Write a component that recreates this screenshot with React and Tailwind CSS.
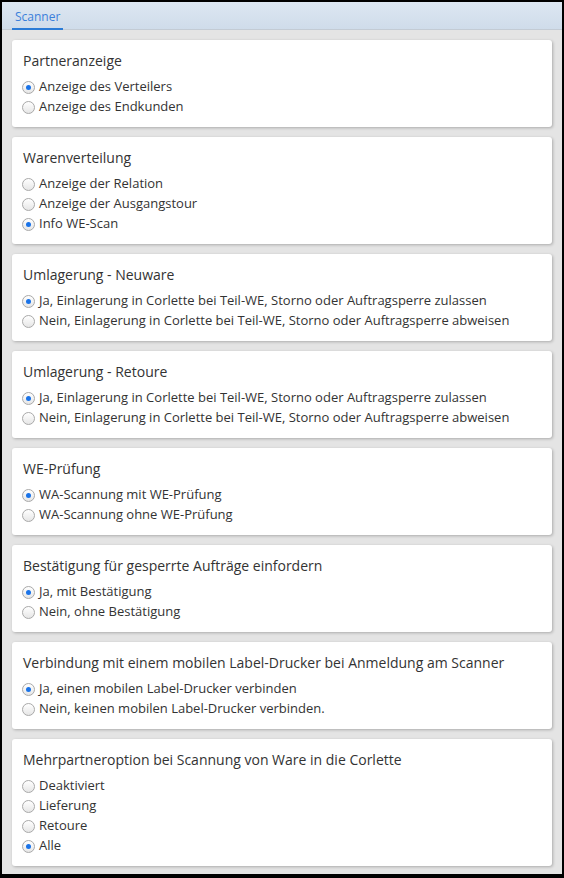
import { useState } from "react";

const sections = [
  {
    title: "Partneranzeige",
    options: ["Anzeige des Verteilers", "Anzeige des Endkunden"],
    selected: 0,
  },
  {
    title: "Warenverteilung",
    options: ["Anzeige der Relation", "Anzeige der Ausgangstour", "Info WE-Scan"],
    selected: 2,
  },
  {
    title: "Umlagerung - Neuware",
    options: [
      "Ja, Einlagerung in Corlette bei Teil-WE, Storno oder Auftragsperre zulassen",
      "Nein, Einlagerung in Corlette bei Teil-WE, Storno oder Auftragsperre abweisen",
    ],
    selected: 0,
  },
  {
    title: "Umlagerung - Retoure",
    options: [
      "Ja, Einlagerung in Corlette bei Teil-WE, Storno oder Auftragsperre zulassen",
      "Nein, Einlagerung in Corlette bei Teil-WE, Storno oder Auftragsperre abweisen",
    ],
    selected: 0,
  },
  {
    title: "WE-Prüfung",
    options: ["WA-Scannung mit WE-Prüfung", "WA-Scannung ohne WE-Prüfung"],
    selected: 0,
  },
  {
    title: "Bestätigung für gesperrte Aufträge einfordern",
    options: ["Ja, mit Bestätigung", "Nein, ohne Bestätigung"],
    selected: 0,
  },
  {
    title: "Verbindung mit einem mobilen Label-Drucker bei Anmeldung am Scanner",
    options: ["Ja, einen mobilen Label-Drucker verbinden", "Nein, keinen mobilen Label-Drucker verbinden."],
    selected: 0,
  },
  {
    title: "Mehrpartneroption bei Scannung von Ware in die Corlette",
    options: ["Deaktiviert", "Lieferung", "Retoure", "Alle"],
    selected: 3,
  },
];

function Radio({ checked, label, onClick }) {
  return (
    <label onClick={onClick} className="flex items-center h-5 cursor-pointer">
      <span className="w-[13px] h-[13px] rounded-full border border-[#a9a9a9] bg-gradient-to-b from-white to-[#e6e6e6] flex items-center justify-center ml-[-1px] mr-[4px] shrink-0">
        {checked && <span className="w-[5px] h-[5px] rounded-full bg-[#1a73e8]" />}
      </span>
      <span className="text-[13px] text-[#333] whitespace-nowrap">{label}</span>
    </label>
  );
}

function Section({ section }) {
  const [sel, setSel] = useState(section.selected);
  return (
    <div className="bg-white rounded-[3px] shadow-[1px_1px_3px_rgba(0,0,0,0.25)] pl-[11px] pt-[11px] pb-[10px]">
      <div className="text-[14px] leading-5 text-[#333] mb-[6px]">{section.title}</div>
      {section.options.map((o, i) => (
        <Radio key={i} label={o} checked={sel === i} onClick={() => setSel(i)} />
      ))}
    </div>
  );
}

export default function App() {
  return (
    <div
      className="w-[564px] h-[878px] border-l-2 border-r-2 border-t-[2px] border-b-4 border-black bg-[#e4e4e4] flex flex-col"
      style={{ fontFamily: '"Open Sans", sans-serif' }}
    >
      <div className="h-[28px] bg-gradient-to-b from-[#dde7f2] to-[#cfdcea] border-b border-[#c3cbd4] flex items-end pl-[10px] shrink-0">
        <div className="px-[3px] pb-[3px] border-b-2 border-[#2b7bd6] text-[12px] text-[#3b7fdb] leading-4 mb-[-1px]">
          Scanner
        </div>
      </div>
      <div className="flex flex-col gap-[10px] pt-[10px] pl-[10px] pr-[10px]">
        {sections.map((s, i) => (
          <Section key={i} section={s} />
        ))}
      </div>
    </div>
  );
}
